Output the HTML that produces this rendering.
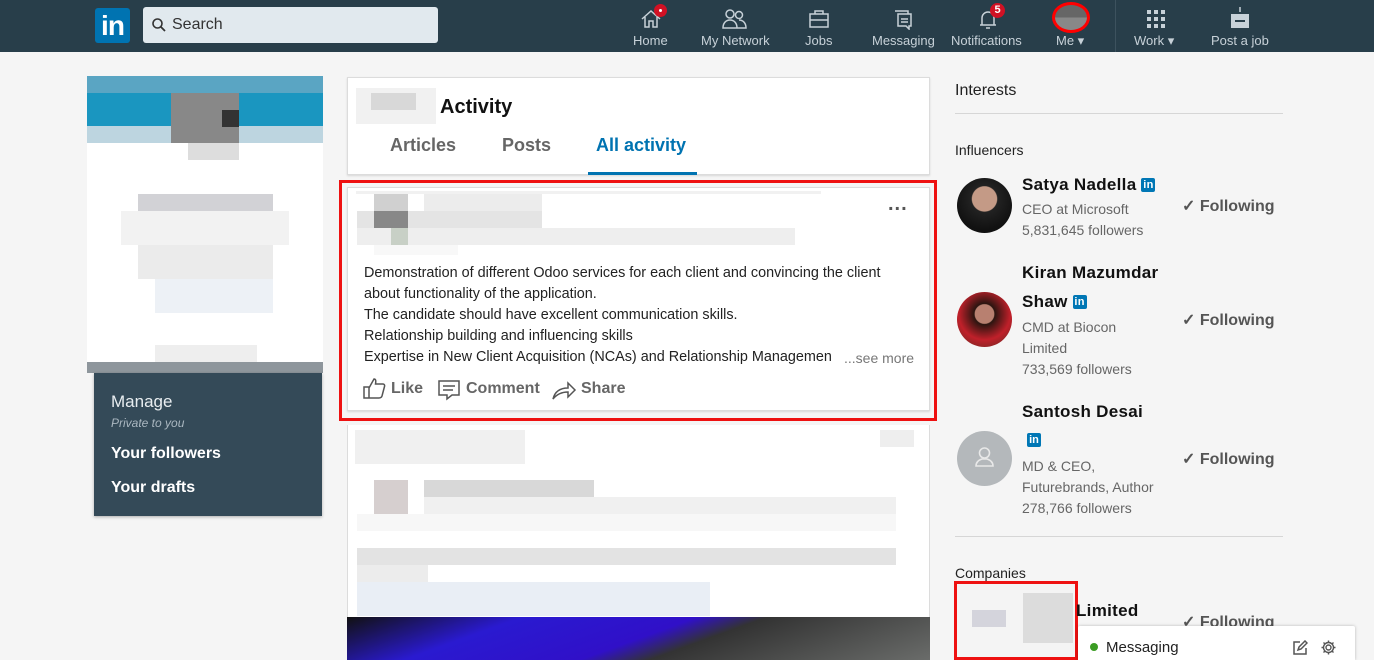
<!DOCTYPE html>
<html><head><meta charset="utf-8">
<style>
*{box-sizing:border-box;margin:0;padding:0}
body{width:1374px;height:660px;overflow:hidden;background:#f5f5f5;font-family:"Liberation Sans",sans-serif;position:relative;color:#000}
.a{position:absolute}
.hdr{left:0;top:0;width:1374px;height:52px;background:#283e4a}
.nav{color:#c7d1d8;font-size:13px;text-align:center;top:33px;white-space:nowrap}
.card{background:#fff;border:1px solid #dcdcdc;box-shadow:0 1px 2px rgba(0,0,0,.12)}
.ptxt{font-size:14.4px;color:#222;line-height:21px}
.nm{font-size:17px;font-weight:bold;color:#111;letter-spacing:.3px}
.sub{font-size:14px;color:#666;line-height:21px}
.fol{font-size:16px;color:#555;font-weight:bold}
.li{display:inline-block;width:14px;height:14px;background:#0077b5;color:#fff;font-size:11px;font-weight:bold;line-height:14px;text-align:center;border-radius:2px;vertical-align:2px}
</style></head><body>
<div class="a hdr"></div>
<div class="a" style="left:95px;top:8px;width:35px;height:35px;background:#0073b1;border-radius:3px;color:#fff;font-weight:bold;font-size:28px;line-height:36px;text-align:center;letter-spacing:-1px">in</div>
<div class="a" style="left:143px;top:7px;width:295px;height:36px;background:#e1e9ee;border-radius:3px"></div>
<svg class="a" style="left:151px;top:17px" width="16" height="16" viewBox="0 0 16 16"><circle cx="6.5" cy="6.5" r="4.5" fill="none" stroke="#333" stroke-width="1.6"/><path d="M10 10l4 4" stroke="#333" stroke-width="1.8"/></svg>
<div class="a" style="left:172px;top:16px;font-size:16px;color:#333">Search</div>

<svg class="a" style="left:640px;top:8px" width="22" height="22" viewBox="0 0 22 22" fill="none" stroke="#c7d1d8" stroke-width="1.5"><path d="M2 11L11 3l9 8M5 9v10h4v-6h4v6h4V9"/></svg>
<div class="a" style="left:654px;top:4px;width:13px;height:13px;border-radius:50%;background:#d11124"></div><div class="a" style="left:659px;top:9px;width:3px;height:3px;background:#fff;border-radius:50%"></div>
<div class="a nav" style="left:633px">Home</div>
<svg class="a" style="left:722px;top:8px" width="26" height="22" viewBox="0 0 26 22" fill="none" stroke="#c7d1d8" stroke-width="1.5"><circle cx="8" cy="6" r="4"/><circle cx="17" cy="7" r="3.5"/><path d="M1 20c0-5 3-8 7-8s7 3 7 8zM14 20h10c0-5-3-8-7-8"/></svg>
<div class="a nav" style="left:701px">My Network</div>
<svg class="a" style="left:808px;top:9px" width="22" height="20" viewBox="0 0 22 20" fill="none" stroke="#c7d1d8" stroke-width="1.5"><rect x="2" y="5" width="18" height="13"/><path d="M7 5V2h8v3M2 11h18"/></svg>
<div class="a nav" style="left:805px">Jobs</div>
<svg class="a" style="left:892px;top:8px" width="22" height="22" viewBox="0 0 22 22" fill="none" stroke="#c7d1d8" stroke-width="1.5"><path d="M3 3h13v3M6 6h13v12h-2v3l-3-3H6zM9 11h7M9 14h7"/></svg>
<div class="a nav" style="left:872px">Messaging</div>
<svg class="a" style="left:977px;top:8px" width="22" height="22" viewBox="0 0 22 22" fill="none" stroke="#c7d1d8" stroke-width="1.5"><path d="M5 17V10a6 6 0 0112 0v7h2H3zM9 20h4"/></svg>
<div class="a" style="left:990px;top:3px;width:15px;height:15px;border-radius:50%;background:#d11124;color:#fff;font-size:11px;font-weight:bold;text-align:center;line-height:15px">5</div>
<div class="a nav" style="left:951px">Notifications</div>
<div class="a" style="left:1052px;top:2px;width:38px;height:31px;border-radius:50%;border:3px solid #ff0000;background:linear-gradient(#666 50%,#888 50%)"></div>
<div class="a nav" style="left:1056px">Me ▾</div>
<div class="a" style="left:1115px;top:0;width:1px;height:52px;background:#3d525e"></div>
<svg class="a" style="left:1146px;top:9px" width="20" height="20" viewBox="0 0 20 20" fill="#c7d1d8"><rect x="1" y="1" width="4" height="4"/><rect x="8" y="1" width="4" height="4"/><rect x="15" y="1" width="4" height="4"/><rect x="1" y="8" width="4" height="4"/><rect x="8" y="8" width="4" height="4"/><rect x="15" y="8" width="4" height="4"/><rect x="1" y="15" width="4" height="4"/><rect x="8" y="15" width="4" height="4"/><rect x="15" y="15" width="4" height="4"/></svg>
<div class="a nav" style="left:1134px">Work ▾</div>
<svg class="a" style="left:1229px;top:6px" width="22" height="24" viewBox="0 0 22 24"><path d="M11 1v5" stroke="#c7d1d8" stroke-width="1.5"/><rect x="2" y="8" width="18" height="14" fill="#c7d1d8"/><rect x="6" y="14" width="10" height="2" fill="#283e4a"/></svg>
<div class="a nav" style="left:1211px">Post a job</div>

<div class="a" style="left:87px;top:76px;width:236px;height:296px;background:#fff"></div>
<div class="a" style="left:87px;top:76px;width:236px;height:50px;background:#1a96c0"></div>
<div class="a" style="left:87px;top:76px;width:236px;height:17px;background:#5aa5c3"></div>
<div class="a" style="left:87px;top:126px;width:236px;height:17px;background:#bdd5e0"></div>
<div class="a" style="left:171px;top:93px;width:68px;height:50px;background:#888"></div>
<div class="a" style="left:222px;top:110px;width:17px;height:17px;background:#333"></div>
<div class="a" style="left:188px;top:143px;width:51px;height:17px;background:#ddd"></div>
<div class="a" style="left:138px;top:194px;width:135px;height:17px;background:#d2d2d6"></div>
<div class="a" style="left:121px;top:211px;width:168px;height:34px;background:#f2f2f2"></div>
<div class="a" style="left:138px;top:245px;width:135px;height:34px;background:#ebebeb"></div>
<div class="a" style="left:155px;top:279px;width:118px;height:34px;background:#edf1f6"></div>
<div class="a" style="left:155px;top:345px;width:102px;height:17px;background:#eee"></div>
<div class="a" style="left:87px;top:362px;width:236px;height:11px;background:#8e969c"></div>
<div class="a" style="left:94px;top:373px;width:228px;height:143px;background:#344a58;box-shadow:0 1px 3px rgba(0,0,0,.3)"></div>
<div class="a" style="left:111px;top:392px;color:#e8edf0;font-size:17px">Manage</div>
<div class="a" style="left:111px;top:416px;color:#aab7c0;font-size:12px;font-style:italic">Private to you</div>
<div class="a" style="left:111px;top:445px;color:#fff;font-size:16px;font-weight:bold">Your followers</div>
<div class="a" style="left:111px;top:479px;color:#fff;font-size:16px;font-weight:bold">Your drafts</div>

<div class="a card" style="left:347px;top:77px;width:583px;height:98px"></div>
<div class="a" style="left:356px;top:88px;width:80px;height:36px;background:#f1f1f1"></div>
<div class="a" style="left:371px;top:93px;width:45px;height:17px;background:#d8d8d8"></div>
<div class="a" style="left:440px;top:96px;font-size:20px;font-weight:bold;color:#111">Activity</div>
<div class="a" style="left:390px;top:135px;font-size:18px;font-weight:bold;color:#666">Articles</div>
<div class="a" style="left:502px;top:135px;font-size:18px;font-weight:bold;color:#666">Posts</div>
<div class="a" style="left:596px;top:135px;font-size:18px;font-weight:bold;color:#0073b1">All activity</div>
<div class="a" style="left:588px;top:172px;width:109px;height:3px;background:#0073b1"></div>

<div class="a" style="left:339px;top:180px;width:598px;height:241px;border:3px solid #ee1111"></div>
<div class="a card" style="left:347px;top:187px;width:583px;height:224px"></div>
<div class="a" style="left:356px;top:191px;width:465px;height:3px;background:#f1f1f1"></div>
<div class="a" style="left:374px;top:194px;width:34px;height:17px;background:#d0d0d0"></div>
<div class="a" style="left:424px;top:194px;width:118px;height:17px;background:#ececec"></div>
<div class="a" style="left:357px;top:211px;width:185px;height:17px;background:#e4e4e4"></div>
<div class="a" style="left:374px;top:211px;width:34px;height:17px;background:#888"></div>
<div class="a" style="left:357px;top:228px;width:438px;height:17px;background:#eeeeee"></div>
<div class="a" style="left:391px;top:228px;width:17px;height:17px;background:#c8d0c6"></div>
<div class="a" style="left:374px;top:245px;width:84px;height:10px;background:#f8f8f8"></div>
<div class="a" style="left:888px;top:199px;font-size:20px;font-weight:bold;color:#555;letter-spacing:1px;line-height:10px">...</div>
<div class="a ptxt" style="left:364px;top:263px;width:560px">Demonstration of different Odoo services for each client and convincing the client<br>about functionality of the application.<br>The candidate should have excellent communication skills.<br>Relationship building and influencing skills<br>Expertise in New Client Acquisition (NCAs) and Relationship Managemen</div>
<div class="a" style="left:844px;top:348px;font-size:14px;color:#777;line-height:21px">...see more</div>
<svg class="a" style="left:362px;top:377px" width="24" height="22" viewBox="0 0 24 22" fill="none" stroke="#555" stroke-width="1.5"><path d="M2 10h5v11H2zM7 11l5-9c2 0 2 2 1.5 5H21c1 0 2 1 1.5 2.5L20 19c-.5 1.5-1.5 2-3 2H7"/></svg>
<div class="a" style="left:391px;top:380px;font-size:16px;font-weight:bold;color:#666">Like</div>
<svg class="a" style="left:437px;top:379px" width="24" height="22" viewBox="0 0 24 22" fill="none" stroke="#555" stroke-width="1.5"><path d="M2 2h20v14h-7l-5 4v-4H2zM6 7h12M6 11h10"/></svg>
<div class="a" style="left:466px;top:380px;font-size:16px;font-weight:bold;color:#666">Comment</div>
<svg class="a" style="left:551px;top:379px" width="26" height="22" viewBox="0 0 26 22" fill="none" stroke="#555" stroke-width="1.5"><path d="M2 20c2-8 8-11 15-11V4l7 7-7 7v-5c-6 0-11 2-15 7z"/></svg>
<div class="a" style="left:581px;top:380px;font-size:16px;font-weight:bold;color:#666">Share</div>

<div class="a" style="left:347px;top:425px;width:583px;height:235px;background:#fff;border-left:1px solid #dcdcdc;border-right:1px solid #dcdcdc"></div>
<div class="a" style="left:355px;top:430px;width:170px;height:34px;background:#f0f0f0"></div>
<div class="a" style="left:880px;top:430px;width:34px;height:17px;background:#eee"></div>
<div class="a" style="left:374px;top:480px;width:34px;height:51px;background:#d6cfcf"></div>
<div class="a" style="left:374px;top:514px;width:34px;height:17px;background:#8c8a86"></div>
<div class="a" style="left:424px;top:480px;width:170px;height:17px;background:#d8d8d8"></div>
<div class="a" style="left:424px;top:497px;width:472px;height:17px;background:#f0f0f0"></div>
<div class="a" style="left:357px;top:514px;width:539px;height:17px;background:#f7f7f7"></div>
<div class="a" style="left:357px;top:548px;width:539px;height:17px;background:#e3e3e3"></div>
<div class="a" style="left:357px;top:565px;width:71px;height:17px;background:#ececec"></div>
<div class="a" style="left:357px;top:582px;width:353px;height:34px;background:#e9eef5"></div>
<div class="a" style="left:347px;top:617px;width:583px;height:43px;background:linear-gradient(160deg,#111 0%,#2a1ad0 25%,#3010c8 50%,#333 60%,#6a6c6a 100%)"></div>

<div class="a" style="left:955px;top:82px;font-size:16px;color:#222">Interests</div>
<div class="a" style="left:955px;top:113px;width:328px;height:1px;background:#d6d6d6"></div>
<div class="a" style="left:955px;top:142px;font-size:14px;color:#222">Influencers</div>

<div class="a" style="left:957px;top:178px;width:55px;height:55px;border-radius:50%;background:radial-gradient(circle at 50% 38%,#c49a86 0 28%,#222 30%,#111 70%),#ccc"></div>
<div class="a nm" style="left:1022px;top:175px">Satya Nadella <span class="li">in</span></div>
<div class="a sub" style="left:1022px;top:199px">CEO at Microsoft<br>5,831,645 followers</div>
<div class="a fol" style="left:1182px;top:196px">✓ Following</div>

<div class="a nm" style="left:1022px;top:263px">Kiran Mazumdar</div>
<div class="a" style="left:957px;top:292px;width:55px;height:55px;border-radius:50%;background:radial-gradient(circle at 50% 40%,#b88070 0 22%,#2a1510 24%,#c0202a 60%,#5a2a20 100%)"></div>
<div class="a nm" style="left:1022px;top:292px">Shaw <span class="li">in</span></div>
<div class="a sub" style="left:1022px;top:317px">CMD at Biocon<br>Limited<br>733,569 followers</div>
<div class="a fol" style="left:1182px;top:310px">✓ Following</div>

<div class="a nm" style="left:1022px;top:402px">Santosh Desai</div>
<div class="a" style="left:1027px;top:432px"><span class="li">in</span></div>
<div class="a" style="left:957px;top:431px;width:55px;height:55px;border-radius:50%;background:#b4b8bb"></div>
<svg class="a" style="left:972px;top:445px" width="25" height="25" viewBox="0 0 25 25" fill="none" stroke="#e8e8e8" stroke-width="1.6"><circle cx="12.5" cy="8" r="5"/><path d="M4 21h17c0-4-3-6-6-7H10c-3 1-6 3-6 7z"/></svg>
<div class="a sub" style="left:1022px;top:456px">MD &amp; CEO,<br>Futurebrands, Author<br>278,766 followers</div>
<div class="a fol" style="left:1182px;top:449px">✓ Following</div>

<div class="a" style="left:955px;top:536px;width:328px;height:1px;background:#d6d6d6"></div>
<div class="a" style="left:955px;top:565px;font-size:14px;color:#222">Companies</div>
<div class="a" style="left:954px;top:581px;width:124px;height:79px;border:3px solid #ee1111;background:#f4f4f4"></div>
<div class="a" style="left:972px;top:610px;width:34px;height:17px;background:#d4d4dc"></div>
<div class="a" style="left:1023px;top:593px;width:50px;height:50px;background:#dcdcdc"></div>
<div class="a nm" style="left:1076px;top:601px">Limited</div>
<div class="a fol" style="left:1182px;top:612px">✓ Following</div>

<div class="a" style="left:1078px;top:626px;width:277px;height:34px;background:#fff;box-shadow:0 0 3px rgba(0,0,0,.25);border-radius:2px 2px 0 0"></div>
<div class="a" style="left:1090px;top:643px;width:8px;height:8px;border-radius:50%;background:#3b9c23"></div>
<div class="a" style="left:1106px;top:639px;font-size:15px;color:#222">Messaging</div>
<svg class="a" style="left:1292px;top:640px" width="16" height="16" viewBox="0 0 16 16" fill="none" stroke="#555" stroke-width="1.5"><path d="M8 2H2v12h12V8M6 10l1-3 6-6 2 2-6 6z"/></svg>
<svg class="a" style="left:1320px;top:639px" width="17" height="17" viewBox="0 0 17 17" fill="none" stroke="#555" stroke-width="1.4"><circle cx="8.5" cy="8.5" r="2.5"/><path d="M8.5 1.5v2M8.5 13.5v2M1.5 8.5h2M13.5 8.5h2M3.5 3.5l1.5 1.5M12 12l1.5 1.5M3.5 13.5L5 12M12 5l1.5-1.5"/><circle cx="8.5" cy="8.5" r="5"/></svg>
</body></html>
